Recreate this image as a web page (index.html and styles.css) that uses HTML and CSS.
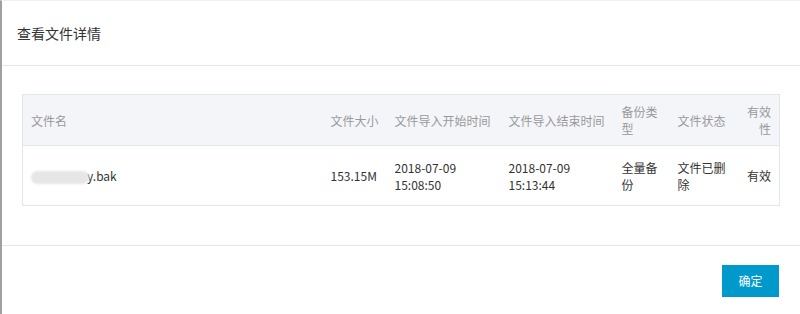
FILE: index.html
```html
<!DOCTYPE html>
<html lang="zh-CN">
<head>
    <meta charset="UTF-8">
    <title>查看文件详情</title>
    <link rel="stylesheet" href="styles.css">
</head>
<body>
    <div class="dialog">
        <div class="dialog-header">查看文件详情</div>
        <div class="dialog-body">
            <table class="file-table">
                <colgroup>
                    <col class="col-name">
                    <col class="col-size">
                    <col class="col-start">
                    <col class="col-end">
                    <col class="col-type">
                    <col class="col-state">
                    <col class="col-valid">
                </colgroup>
                <thead>
                    <tr>
                        <th>文件名</th>
                        <th>文件大小</th>
                        <th>文件导入开始时间</th>
                        <th>文件导入结束时间</th>
                        <th>备份类型</th>
                        <th>文件状态</th>
                        <th class="right">有效性</th>
                    </tr>
                </thead>
                <tbody>
                    <tr>
                        <td><span class="masked"></span><span class="fname">y.bak</span></td>
                        <td>153.15M</td>
                        <td>2018-07-09<br>15:08:50</td>
                        <td>2018-07-09<br>15:13:44</td>
                        <td>全量备份</td>
                        <td>文件已删除</td>
                        <td class="right">有效</td>
                    </tr>
                </tbody>
            </table>
        </div>
        <div class="dialog-footer">
            <a href="#" class="btn-primary">确定</a>
        </div>
    </div>
</body>
</html>
```

FILE: styles.css
```css
body {
    margin: 0;
    padding: 0;
    background: #ffffff;
    font-family: "Noto Sans CJK SC", "Microsoft YaHei", sans-serif;
    color: #333333;
    font-size: 12px;
}
.dialog {
    position: relative;
    height: 313px;
    border-top: 1px solid #f0f0f0;
    border-left: 2px solid #a0a0a0;
    overflow: hidden;
}
.dialog::before {
    content: "";
    position: absolute;
    left: -2px;
    top: 0;
    width: 2px;
    height: 18px;
    background: #6e6e6e;
}
.dialog-header {
    height: 64px;
    line-height: 64px;
    padding-left: 15px;
    font-size: 14px;
    color: #333333;
    border-bottom: 1px solid #e5e5e5;
}
.dialog-body {
    padding: 28px 20px 39px 20px;
    border-bottom: 1px solid #e5e5e5;
}
.file-table {
    width: 758px;
    table-layout: fixed;
    border-collapse: collapse;
    border: 1px solid #e2e5ea;
}
.col-name { width: 300px; }
.col-size { width: 64px; }
.col-start { width: 114px; }
.col-end { width: 113px; }
.col-type { width: 56px; }
.col-state { width: 70px; }
.col-valid { width: 40px; }
.file-table th,
.file-table td {
    text-align: left;
    vertical-align: middle;
    padding: 0 8px;
    line-height: 17px;
    font-size: 12px;
    word-break: break-all;
}
.file-table th {
    height: 50px;
    background: #f4f5f9;
    color: #999999;
    font-weight: normal;
    border-bottom: 1px solid #e2e5ea;
}
.file-table td {
    height: 59px;
    color: #333333;
}
.file-table .right {
    text-align: right;
    padding-left: 4px;
}
.masked {
    display: inline-block;
    vertical-align: middle;
    width: 58px;
    height: 13px;
    border-radius: 6px;
    background: #e6e6e6;
    filter: blur(1px);
}
.fname {
    margin-left: -2px;
}
.dialog-footer {
    display: flex;
    justify-content: flex-end;
    padding: 19px 21px 0 0;
}
.btn-primary {
    display: inline-block;
    width: 57px;
    height: 32px;
    line-height: 32px;
    text-align: center;
    background: #0099cc;
    color: #ffffff;
    font-size: 12px;
    text-decoration: none;
}
```
